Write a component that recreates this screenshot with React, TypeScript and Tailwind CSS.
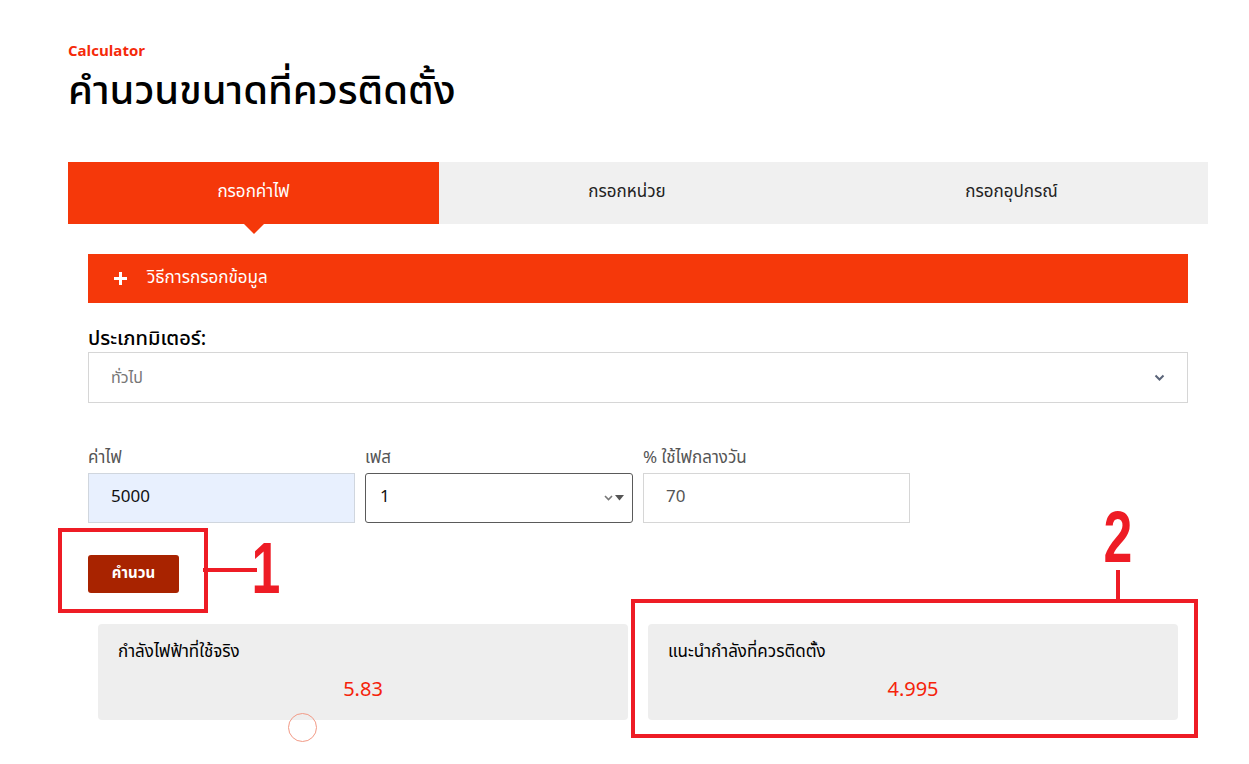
import React from "react";

const thai = { fontFamily: '"Noto Sans Thai", "Noto Sans", "Liberation Sans", sans-serif' };
const impact = { fontFamily: '"Liberation Sans Narrow", "Liberation Sans", sans-serif' };

export default function App() {
  return (
    <div className="relative w-[1249px] h-[764px] bg-white overflow-hidden" style={thai}>
      <div className="pl-[68px] pr-[41px] pt-[42px]">
        <div className="text-[15px] leading-[20px] font-bold text-[#f52a0a]">Calculator</div>
        <h1 className="mt-[4px] text-[40px] leading-[52px] font-medium text-black">คำนวนขนาดที่ควรติดตั้ง</h1>

        {/* Tabs */}
        <div className="mt-[44px] flex h-[62px] w-[1140px] text-[17px]">
          <div className="relative flex w-[371px] items-center justify-center bg-[#f5380a] text-white">
            กรอกค่าไฟ
            <div className="absolute left-1/2 top-full -translate-x-1/2 w-0 h-0 border-l-[10px] border-r-[10px] border-t-[10px] border-l-transparent border-r-transparent border-t-[#f5380a]" />
          </div>
          <div className="flex w-[376px] items-center justify-center bg-[#f0f0f0] text-[#222]">กรอกหน่วย</div>
          <div className="flex flex-1 items-center justify-center bg-[#f0f0f0] text-[#222]">กรอกอุปกรณ์</div>
        </div>

        <div className="px-[20px]">
          {/* Accordion bar */}
          <div className="mt-[30px] flex h-[49px] items-center bg-[#f5380a] pl-[26px] text-white text-[17px]">
            <svg width="13" height="13" viewBox="0 0 13 13" className="mr-[20px]">
              <rect x="5" y="0" width="3" height="13" fill="white" />
              <rect x="0" y="5" width="13" height="3" fill="white" />
            </svg>
            วิธีการกรอกข้อมูล
          </div>

          {/* Meter type */}
          <div className="mt-[23px] text-[20px] leading-[26px] font-medium text-black">ประเภทมิเตอร์:</div>
          <div className="flex h-[51px] items-center justify-between border border-[#d6d6d6] pl-[22px] pr-[22px] text-[16px] text-[#777]">
            <span>ทั่วไป</span>
            <svg width="11" height="8" viewBox="0 0 11 8">
              <path d="M1.5 1.5 L5.5 5.5 L9.5 1.5" stroke="#5a6478" strokeWidth="2" fill="none" />
            </svg>
          </div>

          {/* Inputs */}
          <div className="mt-[44px] flex gap-[10px]">
            <div className="w-[267px]">
              <div className="text-[17px] leading-[22px] text-[#555]">ค่าไฟ</div>
              <div className="mt-[4px] flex h-[50px] items-center border border-[#d0d6de] bg-[#e8f0fe] pl-[22px] text-[17px] text-[#111]">5000</div>
            </div>
            <div className="w-[268px]">
              <div className="text-[17px] leading-[22px] text-[#555]">เฟส</div>
              <div className="mt-[4px] flex h-[50px] items-center justify-between rounded-[3px] border border-[#5a5a5a] pl-[14px] pr-[8px] text-[17px] text-[#111]">
                <span>1</span>
                <span className="flex items-center gap-[2px]">
                  <svg width="9" height="6" viewBox="0 0 9 6">
                    <path d="M1 1 L4.5 4.5 L8 1" stroke="#777" strokeWidth="1.6" fill="none" />
                  </svg>
                  <svg width="9" height="6" viewBox="0 0 9 6">
                    <path d="M0 0 L9 0 L4.5 5.5 Z" fill="#555" />
                  </svg>
                </span>
              </div>
            </div>
            <div className="w-[267px]">
              <div className="text-[17px] leading-[22px] text-[#555]">% ใช้ไฟกลางวัน</div>
              <div className="mt-[4px] flex h-[50px] items-center border border-[#d6d6d6] pl-[22px] text-[17px] text-[#555]">70</div>
            </div>
          </div>

          {/* Button */}
          <div className="mt-[32px]">
            <button className="h-[38px] w-[91px] rounded-[3px] bg-[#a82300] text-[15px] font-bold text-white">คำนวน</button>
          </div>

          {/* Cards */}
          <div className="mt-[31px] flex gap-[20px] px-[10px]">
            <div className="flex h-[96px] w-[530px] flex-col rounded-[4px] bg-[#eeeeee] pl-[20px] pt-[16px]">
              <div className="text-[17px] leading-[24px] text-black">กำลังไฟฟ้าที่ใช้จริง</div>
              <div className="mt-[13px] pr-[20px] text-center text-[20px] leading-[26px] text-[#f5230a]">5.83</div>
            </div>
            <div className="flex h-[96px] w-[530px] flex-col rounded-[4px] bg-[#eeeeee] pl-[20px] pt-[16px]">
              <div className="text-[17px] leading-[24px] text-black">แนะนำกำลังที่ควรติดตั้ง</div>
              <div className="mt-[13px] pr-[20px] text-center text-[20px] leading-[26px] text-[#f5230a]">4.995</div>
            </div>
          </div>
        </div>
      </div>

      {/* Annotations */}
      <div className="absolute left-[58px] top-[528px] h-[85px] w-[150px] border-[4px] border-[#ee1c25]" />
      <div className="absolute left-[203px] top-[568px] h-[4px] w-[54px] bg-[#ee1c25]" />
      <div className="absolute left-[244px] top-[528px] w-[44px] text-center text-[72px] leading-[80px] font-bold text-[#ee1c25] scale-x-[0.72]" style={impact}>1</div>

      <div className="absolute left-[631px] top-[599px] h-[139px] w-[567px] border-[4px] border-[#ee1c25]" />
      <div className="absolute left-[1116px] top-[570px] h-[32px] w-[4px] bg-[#ee1c25]" />
      <div className="absolute left-[1096px] top-[497px] w-[44px] text-center text-[72px] leading-[80px] font-bold text-[#ee1c25] scale-x-[0.72]" style={impact}>2</div>

      <div className="absolute left-[288px] top-[713px] h-[29px] w-[29px] rounded-full border border-[#f29a86]" />
    </div>
  );
}
